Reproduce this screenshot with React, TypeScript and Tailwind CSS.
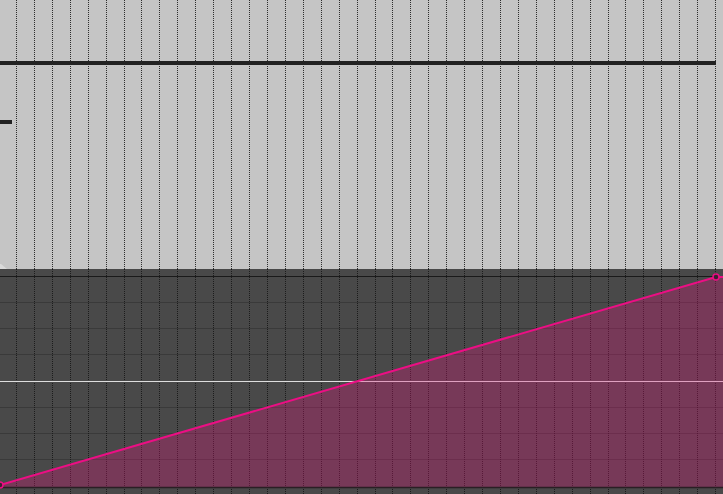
import React from "react";

const W = 723;
const cols = Array.from({ length: 41 }, (_, i) => Math.round(-1.925 + 17.925 * (i + 1)));
const rows = [33, 59, 85, 138, 164, 190];

function DotGrid({ height, color }: { height: number; color: string }) {
  return (
    <svg className="absolute inset-0" width={W} height={height}>
      {cols.map((x) => (
        <line key={x} x1={x + 0.5} y1={0} x2={x + 0.5} y2={height} stroke={color} strokeWidth={1} strokeDasharray="1 1" />
      ))}
    </svg>
  );
}

export default function App() {
  return (
    <div className="flex h-[494px] w-[723px] flex-col overflow-hidden">
      <section className="relative h-[269px] shrink-0 bg-[#c5c5c5]">
        <DotGrid height={269} color="#2e2e2e" />
        <div className="relative flex flex-col pt-[61px]">
          <div className="h-1 w-[716px] bg-[#222222]" />
          <div className="mt-[55px] h-1 w-3 bg-[#222222]" />
        </div>
        <svg className="absolute bottom-0 left-0" width={8} height={5}>
          <polygon points="0,0 1,0 7,5 0,5" fill="#dadada" />
        </svg>
      </section>

      <section className="relative flex-1 bg-[#494949]">
        <svg className="absolute inset-0" width={W} height={225}>
          {rows.map((y) => (
            <line key={y} x1={0} y1={y + 0.5} x2={W} y2={y + 0.5} stroke="#3a3a3a" strokeWidth={1} />
          ))}
          {cols.map((x) => (
            <line key={x} x1={x + 0.5} y1={0} x2={x + 0.5} y2={225} stroke="#1c1c1c" strokeWidth={1} strokeDasharray="1 1" />
          ))}
          <line x1={0} y1={7.5} x2={W} y2={7.5} stroke="#1a1a1a" strokeWidth={1} />
          <line x1={0} y1={112.5} x2={W} y2={112.5} stroke="#dedede" strokeWidth={1.2} />
          <polygon points="0,216 716,8 723,8 723,218 0,218" fill="#e0157a" fillOpacity={0.3} />
          <line x1={0} y1={218.5} x2={W} y2={218.5} stroke="#2a1f24" strokeWidth={1.5} />
          <polyline points="0,216 716,8 723,8" fill="none" stroke="#ec0e84" strokeWidth={2} />
          <circle cx={716} cy={8} r={3} fill="#3a2230" stroke="#ec0e84" strokeWidth={1.5} />
          <circle cx={0} cy={216} r={3} fill="#3a2230" stroke="#ec0e84" strokeWidth={1.5} />
        </svg>
      </section>
    </div>
  );
}
